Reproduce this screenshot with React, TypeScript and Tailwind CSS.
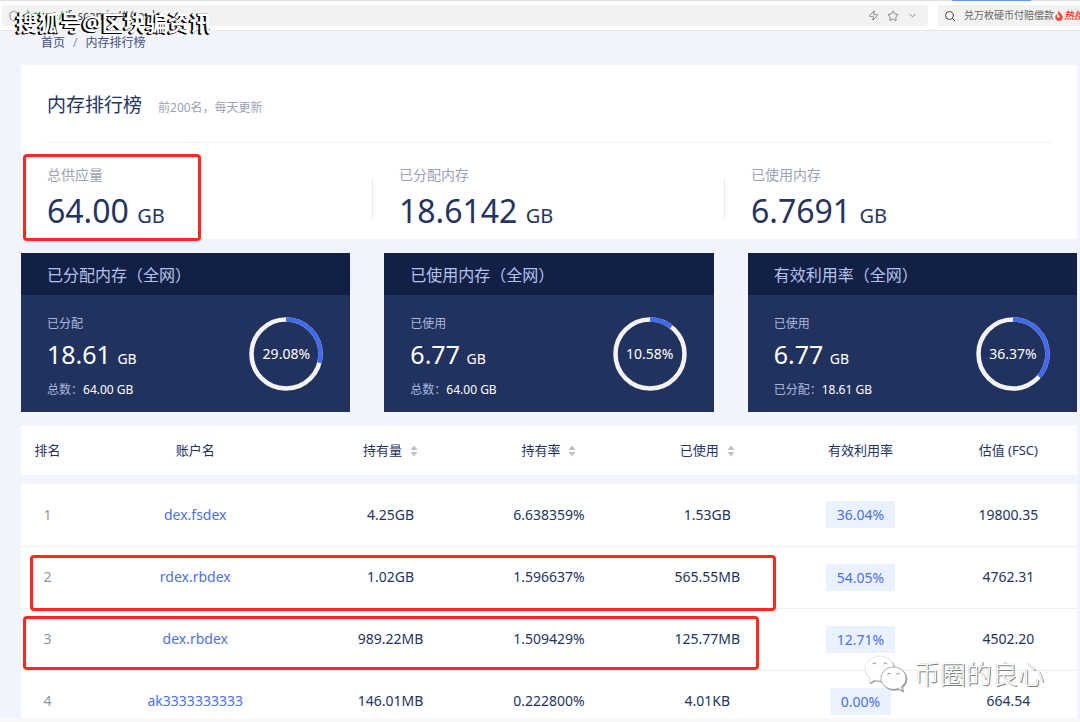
import { ChevronDown, Search, Shield, Star, Zap } from "lucide-react";
import { FaFire } from "react-icons/fa";

const stats = [
  { label: "总供应量", value: "64.00", marked: true },
  { label: "已分配内存", value: "18.6142", marked: false },
  { label: "已使用内存", value: "6.7691", marked: false },
];

const cards = [
  { title: "已分配内存（全网）", label: "已分配", value: "18.61", totalLabel: "总数：", total: "64.00 GB", percent: 29.08 },
  { title: "已使用内存（全网）", label: "已使用", value: "6.77", totalLabel: "总数：", total: "64.00 GB", percent: 10.58 },
  { title: "有效利用率（全网）", label: "已使用", value: "6.77", totalLabel: "已分配：", total: "18.61 GB", percent: 36.37 },
];

const columns = [
  { label: "排名", sortable: false },
  { label: "账户名", sortable: false },
  { label: "持有量", sortable: true },
  { label: "持有率", sortable: true },
  { label: "已使用", sortable: true },
  { label: "有效利用率", sortable: false },
  { label: "估值 (FSC)", sortable: false },
];

const rows = [
  { rank: 1, account: "dex.fsdex", amount: "4.25GB", share: "6.638359%", used: "1.53GB", rate: "36.04%", price: "19800.35" },
  { rank: 2, account: "rdex.rbdex", amount: "1.02GB", share: "1.596637%", used: "565.55MB", rate: "54.05%", price: "4762.31" },
  { rank: 3, account: "dex.rbdex", amount: "989.22MB", share: "1.509429%", used: "125.77MB", rate: "12.71%", price: "4502.20" },
  { rank: 4, account: "ak3333333333", amount: "146.01MB", share: "0.222800%", used: "4.01KB", rate: "0.00%", price: "664.54" },
];

function Ring({ percent }: { percent: number }) {
  const length = 2 * Math.PI * 34.5;
  return (
    <div className="relative flex h-[74px] w-[74px] items-center justify-center">
      <svg viewBox="0 0 74 74" className="absolute inset-0 -rotate-90">
        <circle cx="37" cy="37" r="34.5" fill="none" stroke="#f3f3f3" strokeWidth="4.5" />
        <circle
          cx="37"
          cy="37"
          r="34.5"
          fill="none"
          stroke="#4169eb"
          strokeWidth="4.5"
          strokeDasharray={`${(length * percent) / 100} ${length}`}
        />
      </svg>
      <span className="relative text-sm text-white">{percent.toFixed(2)}%</span>
    </div>
  );
}

function SortIcon() {
  return (
    <svg viewBox="0 0 8 12" className="h-3 w-2" fill="#bfc1c6">
      <path d="M4 0.5 7.5 5h-7z" />
      <path d="M4 11.5 7.5 7h-7z" />
    </svg>
  );
}

function WechatIcon() {
  return (
    <svg viewBox="0 0 44 38" className="h-[38px] w-11 drop-shadow-[1px_1px_0_#9a9a9a]">
      <path
        d="M15.500 1C7.500 1 1 6.500 1 13.500c0 4 2 7.300 5.300 9.600L5 28l5.500-2.900c1.600.5 3.300.7 5 .7 8 0 14.500-5.300 14.500-12.300S23.500 1 15.500 1z"
        fill="#fff"
        stroke="#d4d4d4"
        strokeWidth="0.6"
      />
      <path
        d="M29.500 12c7 0 12.500 5 12.500 11.200 0 3.500-1.800 6.400-4.500 8.500l1.200 4.300-4.700-2.400c-1.400.4-2.900.7-4.500.7C22.500 34.300 17 29.400 17 23.200S22.500 12 29.500 12z"
        fill="#fff"
        stroke="#9a9a9a"
        strokeWidth="0.8"
      />
      <g fill="none" stroke="#888" strokeWidth="1">
        <path d="M8.500 9.200a1.900 1.900 0 0 1 3.600 0" />
        <path d="M19.500 9.200a1.900 1.900 0 0 1 3.600 0" />
        <path d="M23.500 19.500a1.700 1.700 0 0 1 3.200 0" />
        <path d="M32.500 19.500a1.700 1.700 0 0 1 3.200 0" />
      </g>
    </svg>
  );
}

function TopBar() {
  return (
    <header className="relative flex h-[31px] shrink-0 items-center gap-2.5 border-b border-t border-b-[#e8e8ea] border-t-[#dedede] bg-white pl-0.5">
      <div className="absolute -top-px right-[49px] h-px w-[79px] bg-[#5b9bf3]" />
      <div className="flex h-[21px] min-w-0 flex-1 items-center justify-between rounded-sm bg-[#f2f2f2] px-1.5 text-xs">
        <div className="flex items-center gap-1.5">
          <Shield size={12} className="text-[#8c8c8c]" />
          <span className="text-[#35b558]">https://<span className="text-[#444]">fsscan.io/#/rank</span></span>
        </div>
        <div className="flex items-center gap-2 pr-1 text-[#777]">
          <button aria-label="加速"><Zap size={11} strokeWidth={1.8} /></button>
          <button aria-label="收藏"><Star size={12} strokeWidth={1.8} /></button>
          <button aria-label="更多"><ChevronDown size={11} strokeWidth={1.8} /></button>
        </div>
      </div>
      <div className="flex h-[21px] w-[142px] items-center gap-2 overflow-hidden whitespace-nowrap bg-[#f2f2f2] pl-1.5 text-[10px] text-[#666]">
        <Search size={12} className="shrink-0 text-[#444]" />
        <span>兑万枚硬币付赔偿款</span>
        <span className="-ml-2 flex items-center font-bold italic text-[#f5483b]">
          <FaFire size={10} />热搜
        </span>
      </div>
      <div className="absolute left-4 top-[5px] whitespace-nowrap text-[22px] font-bold leading-8 text-white [text-shadow:-1px_0_0_#000,-2px_1px_0_#000,-1px_1px_0_#000]">
        搜狐号@区块骗资讯
      </div>
    </header>
  );
}

export default function App() {
  return (
    <div className="relative flex h-screen flex-col overflow-hidden bg-[#f1f4fd] font-['Noto_Sans','Noto_Sans_CJK_SC',sans-serif] text-[#24335f]">
      <TopBar />

      <nav className="flex h-[34px] shrink-0 gap-2 pl-[41px] text-xs leading-6 text-[#43507a]">
        <a href="#home">首页</a>
        <span className="text-[#8890a6]">/</span>
        <a href="#rank">内存排行榜</a>
      </nav>

      <main className="ml-[21px] mr-[3px] min-h-0 flex-1 overflow-hidden">
        <section className="bg-white px-[26px]">
          <div className="flex h-[78px] items-baseline gap-4 border-b border-[#f0f0f2] pt-[26px]">
            <h1 className="text-[19px] leading-7">内存排行榜</h1>
            <p className="text-xs text-[#9ca1b3]">前200名，每天更新</p>
          </div>
          <div className="-mr-[52px] grid h-24 grid-cols-3">
            {stats.map((stat, i) => (
              <div key={stat.label} className="relative pt-5">
                <p className="text-sm leading-6 text-[#9ca1b3]">{stat.label}</p>
                <p className="text-[32px] leading-[48px]">
                  {stat.value} <span className="text-xl">GB</span>
                </p>
                {i < 2 && <div className="absolute right-[26px] top-[35px] h-10 w-px bg-[#e7eaf2]" />}
                {stat.marked && <div className="absolute -left-6 top-[11px] h-[87px] w-[178px] rounded border-3 border-[#ff2a1d]" />}
              </div>
            ))}
          </div>
        </section>

        <section className="mt-3.5 grid grid-cols-3 gap-[34px]">
          {cards.map((card) => (
            <article key={card.title} className="bg-[#22325e]">
              <h2 className="h-[42px] bg-[#132045] pl-[26px] text-base leading-[44px] text-[#b3c2ec]">{card.title}</h2>
              <div className="flex h-[117px] items-center justify-between pl-[26px] pr-[27px]">
                <div className="pt-2 text-xs text-[#aab7dd]">
                  <p className="leading-5">{card.label}</p>
                  <p className="mb-1 text-[25px] leading-10 text-white">
                    {card.value} <span className="text-sm">GB</span>
                  </p>
                  <p className="leading-6">
                    {card.totalLabel}
                    <span className="text-white">{card.total}</span>
                  </p>
                </div>
                <Ring percent={card.percent} />
              </div>
            </article>
          ))}
        </section>

        <div className="relative mt-3.5">
          <table className="w-full table-fixed border-collapse text-center text-sm">
            <colgroup>
              <col className="w-[5%]" />
              <col className="w-[23%]" />
              <col className="w-[14%]" />
              <col className="w-[16%]" />
              <col className="w-[14%]" />
              <col className="w-[15%]" />
              <col className="w-[13%]" />
            </colgroup>
            <thead>
              <tr className="h-[49px] bg-white text-[13px]">
                {columns.map((column) => (
                  <th key={column.label} className="whitespace-nowrap p-0 font-normal">
                    {column.sortable ? (
                      <button className="inline-flex items-center gap-2">
                        {column.label}
                        <SortIcon />
                      </button>
                    ) : (
                      column.label
                    )}
                  </th>
                ))}
              </tr>
              <tr className="h-[9px]" />
            </thead>
            <tbody>
              {rows.map((row) => (
                <tr key={row.rank} className="h-[62px] border-b border-[#efeff1] bg-white">
                  <td className="p-0 text-[#8f96a8]">{row.rank}</td>
                  <td className="p-0">
                    <a href={`#${row.account}`} className="text-[#4b70e8]">{row.account}</a>
                  </td>
                  <td className="p-0">{row.amount}</td>
                  <td className="p-0">{row.share}</td>
                  <td className="p-0">{row.used}</td>
                  <td className="p-0">
                    <span className="inline-block bg-[#eaf2ff] px-[11px] leading-[27px] text-[#4b70e8]">{row.rate}</span>
                  </td>
                  <td className="p-0">{row.price}</td>
                </tr>
              ))}
            </tbody>
          </table>
          <div className="absolute left-[9px] top-[129px] h-14 w-[746px] rounded border-3 border-[#ff2a1d]" />
          <div className="absolute left-0.5 top-[190px] h-[54px] w-[736px] rounded border-3 border-[#ff2a1d]" />
        </div>
      </main>

      <div className="h-1 shrink-0 bg-[#f8f8f9]" />

      {/* Account watermark */}
      <div className="absolute bottom-7 right-9 flex items-center gap-1.5">
        <WechatIcon />
        <span className="text-[26px] font-light leading-10 text-white [text-shadow:1px_1px_0_#808080,0_0_1px_#a0a0a0]">币圈的良心</span>
      </div>
    </div>
  );
}
